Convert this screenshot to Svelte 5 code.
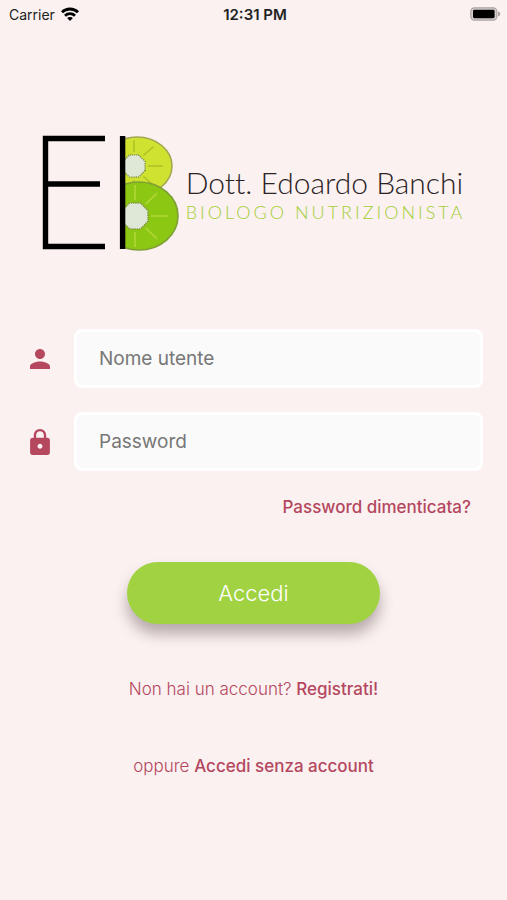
<script lang="ts">
	let username = $state('');
	let password = $state('');

	// The two kiwi slices that form the letter B
	interface Slice {
		cx: number;
		cy: number;
		rx: number;
		ry: number;
		coreX: number;
		core: number;
		fill: string;
		rind: string;
		ray: string;
	}

	const slices: Slice[] = [
		{ cx: 95, cy: 31, rx: 35, ry: 29, coreX: 92, core: 12, fill: '#cfe22f', rind: '#a3a653', ray: '#a9c024' },
		{ cx: 97, cy: 81, rx: 39, ry: 34, coreX: 93, core: 14, fill: '#8cc713', rind: '#7f9f35', ray: '#b4da3a' },
	];

	const angles = [-90, -48, 0, 48, 90];

	function rayPath(slice: Slice, angle: number): string {
		const rad = (angle * Math.PI) / 180;
		const x = slice.coreX + Math.cos(rad) * (slice.core + 2);
		const y = slice.cy + Math.sin(rad) * (slice.core + 2);
		const x2 = slice.coreX + Math.cos(rad) * (slice.rx - 6);
		const y2 = slice.cy + Math.sin(rad) * (slice.ry - 3);
		return `M${x} ${y}L${x2} ${y2}`;
	}

	// Seed ring around the core, flattened into an octagon
	function corePoints(slice: Slice): string {
		return [22, 67, 112, 157, 202, 247, 292, 337]
			.map((deg) => {
				const rad = (deg * Math.PI) / 180;
				return `${slice.coreX + Math.cos(rad) * slice.core},${slice.cy + Math.sin(rad) * slice.core}`;
			})
			.join(' ');
	}

	function handleSubmit(e: SubmitEvent) {
		e.preventDefault();
	}
</script>

<div class="screen">
	<header class="status-bar">
		<div class="carrier">
			<span>Carrier</span>
			<svg viewBox="0 0 18 14" width="18" height="14" aria-hidden="true">
				<g fill="none" stroke="#000" stroke-width="2.8">
					<path d="M1 5.3C5.4.9 12.6.9 17 5.3" />
					<path d="M4 8.7C6.8 6 11.2 6 14 8.7" />
				</g>
				<path d="M9 14L6.1 11C7.7 9.600 10.300 9.600 11.900 11z" />
			</svg>
		</div>
		<span class="time">12:31 PM</span>
		<div class="battery">
			<svg viewBox="0 0 31 14" width="31" height="14" aria-hidden="true">
				<rect x="0.8" y="0.8" width="26" height="12.4" rx="3.6" fill="#d5cecd" stroke="#aaa5a4" stroke-width="1.2" />
				<rect x="3" y="2.8" width="21.6" height="8.4" rx="1.4" />
				<path d="M28 4.6c3 .6 3 4.2 0 4.8z" fill="#aaa5a4" />
			</svg>
		</div>
	</header>

	<main>
		<div class="brand">
			<svg class="monogram" viewBox="0 0 138 117" width="138" height="117" aria-hidden="true">
				<defs>
					<clipPath id="half">
						<rect x="83" y="0" width="55" height="117" />
					</clipPath>
				</defs>
				<g clip-path="url(#half)">
					{#each slices as slice}
						<ellipse cx={slice.cx} cy={slice.cy} rx={slice.rx} ry={slice.ry} fill={slice.fill} stroke={slice.rind} stroke-width="1.6" />
						{#each angles as angle}
							<path d={rayPath(slice, angle)} stroke={slice.ray} stroke-width="1.4" />
						{/each}
						<polygon points={corePoints(slice)} fill="#dfe8d6" stroke="#7d8b45" stroke-width="1.4" stroke-dasharray="1.2 1" />
					{/each}
				</g>
				<path d="M63 3.5H3.500V111.500H63M3.500 49H58" fill="none" stroke="#000" stroke-width="5.4" />
				<path d="M80.6 1V114" stroke="#000" stroke-width="5.4" />
			</svg>
			<div class="wordmark">
				<h1>Dott. Edoardo Banchi</h1>
				<p>BIOLOGO NUTRIZIONISTA</p>
			</div>
		</div>

		<form onsubmit={handleSubmit}>
			<div class="field">
				<label for="username" aria-label="Nome utente">
					<svg viewBox="4 4 16 16" width="20" height="20" fill="currentColor">
						<path d="M12 12c2.210 0 4-1.790 4-4s-1.790-4-4-4-4 1.790-4 4 1.790 4 4 4zm0 2c-2.670 0-8 1.340-8 4v2h16v-2c0-2.660-5.330-4-8-4z" />
					</svg>
				</label>
				<input id="username" type="text" placeholder="Nome utente" autocomplete="username" bind:value={username} />
			</div>
			<div class="field">
				<label for="password" aria-label="Password">
					<svg viewBox="4 1 16 21" width="20" height="26" fill="currentColor">
						<path d="M18 8h-1V6c0-2.760-2.240-5-5-5S7 3.240 7 6v2H6c-1.100 0-2 .9-2 2v10c0 1.100.9 2 2 2h12c1.100 0 2-.9 2-2V10c0-1.100-.9-2-2-2zm-6 9c-1.100 0-2-.9-2-2s.9-2 2-2 2 .9 2 2-.9 2-2 2zm3.100-9H8.900V6c0-1.710 1.390-3.100 3.100-3.100s3.100 1.390 3.100 3.100v2z" />
					</svg>
				</label>
				<input id="password" type="password" placeholder="Password" autocomplete="current-password" bind:value={password} />
			</div>
			<a class="forgot" href="#recupera">Password dimenticata?</a>
			<button type="submit">Accedi</button>
		</form>

		<p class="alt">Non hai un account? <a href="#registrati">Registrati!</a></p>
		<p class="alt">oppure <a href="#ospite">Accedi senza account</a></p>
	</main>
</div>

<style>
	:global(body) {
		margin: 0;
		background: #faf1f0;
	}

	.screen {
		box-sizing: border-box;
		min-height: 100vh;
		background: #faf1f0;
		color: #b5475f;
		font-family: Inter, 'Liberation Sans', sans-serif;
	}

	.status-bar {
		display: grid;
		grid-template-columns: 1fr auto 1fr;
		align-items: center;
		height: 28px;
		padding: 0 6px 0 9px;
		color: #222;
		font-size: 14px;
	}

	.carrier {
		display: flex;
		align-items: center;
		gap: 6px;
	}

	.time {
		font-size: 15px;
		font-weight: 600;
	}

	.battery {
		display: flex;
		justify-content: flex-end;
	}

	main {
		display: flex;
		flex-direction: column;
		padding: 107px 24px 0;
	}

	.brand {
		display: flex;
		justify-content: center;
		align-items: center;
		gap: 6px;
	}

	.monogram {
		flex-shrink: 0;
	}

	.wordmark {
		font-family: Lato, sans-serif;
		font-variant-ligatures: none;
		font-weight: 300;
		white-space: nowrap;
	}

	.wordmark h1 {
		margin: 0;
		color: #2b2326;
		font-size: 30px;
		font-weight: inherit;
		line-height: 36px;
	}

	.wordmark p {
		margin: 0;
		color: #a4cf36;
		font-size: 18px;
		letter-spacing: 3px;
		line-height: 24px;
	}

	form {
		display: flex;
		flex-direction: column;
		gap: 24px;
		margin-top: 77px;
	}

	.field {
		display: flex;
		align-items: center;
	}

	.field label {
		display: flex;
		justify-content: center;
		flex: 0 0 32px;
		margin-right: 18px;
	}

	.field input {
		box-sizing: border-box;
		flex: 1;
		min-width: 0;
		height: 59px;
		padding: 0 22px;
		border: 3px solid #fff;
		border-radius: 8px;
		background: #fafafa;
		color: #333;
		font: inherit;
		font-size: 19px;
		outline: none;
	}

	.field input::placeholder {
		color: #777;
		opacity: 1;
	}

	a {
		color: #b5475f;
		font-weight: 500;
		text-decoration: none;
	}

	.forgot {
		align-self: flex-end;
		margin-right: 12px;
		font-size: 17px;
		line-height: 24px;
	}

	button {
		align-self: center;
		width: 55%;
		height: 62px;
		margin-top: 19px;
		border: none;
		border-radius: 31px;
		background: #a0d242;
		box-shadow: 0 10px 14px rgba(60, 40, 45, 0.35);
		color: #fff;
		font: inherit;
		font-size: 22px;
		font-weight: 300;
		cursor: pointer;
	}

	.alt {
		margin: 53px 0 0;
		font-size: 17px;
		font-weight: 300;
		line-height: 24px;
		text-align: center;
	}
</style>
